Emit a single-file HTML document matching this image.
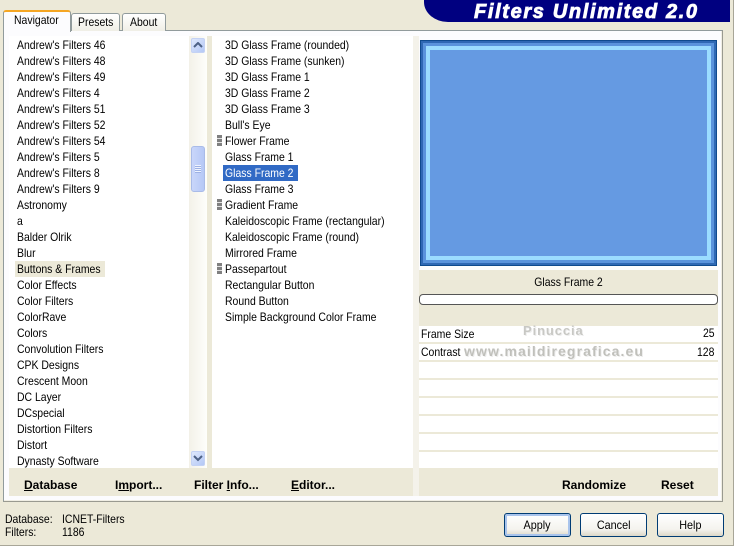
<!DOCTYPE html>
<html><head><meta charset="utf-8"><style>
html,body{margin:0;padding:0}
body{width:734px;height:546px;overflow:hidden;background:#ece9d8;position:relative;font-family:"Liberation Sans",sans-serif;font-size:12px;color:#000}
div{position:absolute;box-sizing:border-box}
.t{white-space:nowrap;line-height:16px;height:16px;transform:scaleX(.87);transform-origin:0 50%}
.b{font-weight:bold;font-size:12px;white-space:nowrap;line-height:16px;top:477px}
.btn{top:513px;width:67px;height:24px;border:1px solid #003c74;border-radius:3px;background:linear-gradient(#fff,#f4f3ee 70%,#dcd8c8);text-align:center;line-height:22px}
.btn span{display:inline-block;transform:scaleX(.9)}
.l{left:17px}.m{left:225px}
.grip{left:217px;width:5px;height:11px;background:repeating-linear-gradient(#808080 0,#808080 3px,#e4e4e4 3px,#e4e4e4 4px)}
u{text-decoration:underline}
</style></head><body>
<!-- logo -->
<div style="left:424px;top:0;width:306px;height:22px;background:#000080;border-bottom-left-radius:24px 20px"></div>
<div class="t" style="left:474px;top:1px;height:22px;line-height:22px;color:#fff;font-weight:bold;font-style:italic;font-size:20px;letter-spacing:1.65px;-webkit-text-stroke:.8px #fff;transform:none">Filters Unlimited 2.0</div>
<!-- panel -->
<div style="left:3px;top:30px;width:720px;height:472px;background:#fcfcfe;border:1px solid #919b9c;border-right-color:#9a9a90;border-bottom-color:#9a9a90;box-shadow:inset -1px -1px 0 #f0eee4"></div>
<!-- tabs -->
<div style="left:71px;top:13px;width:49px;height:18px;background:linear-gradient(#fff,#f0efe6);border:1px solid #919b9c;border-bottom:0;border-radius:3px 3px 0 0"></div>
<div style="left:122px;top:13px;width:44px;height:18px;background:linear-gradient(#fff,#f0efe6);border:1px solid #919b9c;border-bottom:0;border-radius:3px 3px 0 0"></div>
<div style="left:3px;top:10px;width:68px;height:22px;background:#fcfcfe;border:1px solid #919b9c;border-bottom:0;border-top:2px solid #f5a623;border-radius:3px 3px 0 0"></div>
<div class="t" style="left:14px;top:12px">Navigator</div>
<div class="t" style="left:78px;top:14px">Presets</div>
<div class="t" style="left:130px;top:14px">About</div>
<!-- list areas -->
<div style="left:9px;top:36px;width:180px;height:432px;background:#fff"></div>
<div style="left:189px;top:36px;width:18px;height:432px;background:linear-gradient(90deg,#f3f1e8,#fefefb)"></div>
<div style="left:207px;top:36px;width:5px;height:432px;background:#ece9d8"></div>
<div style="left:212px;top:36px;width:201px;height:432px;background:#fff"></div>
<div style="left:413px;top:36px;width:6px;height:460px;background:#f4f2ea"></div>
<div style="left:9px;top:468px;width:404px;height:28px;background:#ece9d8"></div>
<div style="left:419px;top:468px;width:299px;height:28px;background:#ece9d8"></div>
<!-- scrollbar -->
<div style="left:191px;top:38px;width:14px;height:15px;background:linear-gradient(135deg,#dfe8fc,#b4c8f6);border:1px solid #c4d2f4;border-radius:2px"></div>
<svg style="position:absolute;left:193px;top:42px" width="10" height="7"><path d="M1 5L5 1L9 5" fill="none" stroke="#4d6185" stroke-width="2"/></svg>
<div style="left:191px;top:146px;width:14px;height:46px;background:linear-gradient(90deg,#c9d6fa,#b6c8f6);border:1px solid #a9bbe8;border-radius:3px"></div>
<div style="left:195px;top:165px;width:6px;height:8px;background:repeating-linear-gradient(#eef3ff 0,#eef3ff 1px,#9db1e4 1px,#9db1e4 2px)"></div>
<div style="left:191px;top:451px;width:14px;height:15px;background:linear-gradient(135deg,#dfe8fc,#b4c8f6);border:1px solid #c4d2f4;border-radius:2px"></div>
<svg style="position:absolute;left:193px;top:455px" width="10" height="7"><path d="M1 1L5 5L9 1" fill="none" stroke="#4d6185" stroke-width="2"/></svg>
<!-- selections -->
<div style="left:15px;top:261px;width:90px;height:16px;background:#ece9d8"></div>
<div style="left:223px;top:165px;width:75px;height:16px;background:#316ac5"></div>
<!-- left list -->
<div class="t l" style="top:37px">Andrew's Filters 46</div>
<div class="t l" style="top:53px">Andrew's Filters 48</div>
<div class="t l" style="top:69px">Andrew's Filters 49</div>
<div class="t l" style="top:85px">Andrew's Filters 4</div>
<div class="t l" style="top:101px">Andrew's Filters 51</div>
<div class="t l" style="top:117px">Andrew's Filters 52</div>
<div class="t l" style="top:133px">Andrew's Filters 54</div>
<div class="t l" style="top:149px">Andrew's Filters 5</div>
<div class="t l" style="top:165px">Andrew's Filters 8</div>
<div class="t l" style="top:181px">Andrew's Filters 9</div>
<div class="t l" style="top:197px">Astronomy</div>
<div class="t l" style="top:213px">a</div>
<div class="t l" style="top:229px">Balder Olrik</div>
<div class="t l" style="top:245px">Blur</div>
<div class="t l" style="top:261px">Buttons &amp; Frames</div>
<div class="t l" style="top:277px">Color Effects</div>
<div class="t l" style="top:293px">Color Filters</div>
<div class="t l" style="top:309px">ColorRave</div>
<div class="t l" style="top:325px">Colors</div>
<div class="t l" style="top:341px">Convolution Filters</div>
<div class="t l" style="top:357px">CPK Designs</div>
<div class="t l" style="top:373px">Crescent Moon</div>
<div class="t l" style="top:389px">DC Layer</div>
<div class="t l" style="top:405px">DCspecial</div>
<div class="t l" style="top:421px">Distortion Filters</div>
<div class="t l" style="top:437px">Distort</div>
<div class="t l" style="top:453px">Dynasty Software</div>
<!-- middle list -->
<div class="t m" style="top:37px">3D Glass Frame (rounded)</div>
<div class="t m" style="top:53px">3D Glass Frame (sunken)</div>
<div class="t m" style="top:69px">3D Glass Frame 1</div>
<div class="t m" style="top:85px">3D Glass Frame 2</div>
<div class="t m" style="top:101px">3D Glass Frame 3</div>
<div class="t m" style="top:117px">Bull's Eye</div>
<div class="grip" style="top:135px"></div>
<div class="t m" style="top:133px">Flower Frame</div>
<div class="t m" style="top:149px">Glass Frame 1</div>
<div class="t m" style="top:165px;color:#fff">Glass Frame 2</div>
<div class="t m" style="top:181px">Glass Frame 3</div>
<div class="grip" style="top:199px"></div>
<div class="t m" style="top:197px">Gradient Frame</div>
<div class="t m" style="top:213px">Kaleidoscopic Frame (rectangular)</div>
<div class="t m" style="top:229px">Kaleidoscopic Frame (round)</div>
<div class="t m" style="top:245px">Mirrored Frame</div>
<div class="grip" style="top:263px"></div>
<div class="t m" style="top:261px">Passepartout</div>
<div class="t m" style="top:277px">Rectangular Button</div>
<div class="t m" style="top:293px">Round Button</div>
<div class="t m" style="top:309px">Simple Background Color Frame</div>
<!-- preview -->
<div style="left:420px;top:40px;width:297px;height:226px;background:#3f7bc6;border:1px solid #0f4a8e"></div>
<div style="left:421px;top:41px;width:295px;height:224px;border:2px solid #2f68b4"></div>
<div style="left:423px;top:43px;width:291px;height:220px;border:3px solid #5a93dc"></div>
<div style="left:426px;top:46px;width:285px;height:214px;border:4px solid #9bdcff;background:#659ae2"></div>
<!-- params -->
<div style="left:419px;top:270px;width:299px;height:56px;background:#ece9d8"></div>
<div class="t" style="left:419px;top:274px;width:299px;text-align:center;transform-origin:50% 50%">Glass Frame 2</div>
<div style="left:419px;top:294px;width:299px;height:11px;background:#fff;border:1px solid #555;border-radius:4px"></div>
<div style="left:419px;top:326px;width:299px;height:142px;background:#fff"></div>
<div style="left:419px;top:342px;width:299px;height:126px;background:repeating-linear-gradient(#ece9d8 0,#ece9d8 2px,#fff 2px,#fff 18px)"></div>
<div class="t" style="left:421px;top:326px">Frame Size</div>
<div class="t" style="left:703px;top:325px">25</div>
<div class="t" style="left:421px;top:344px">Contrast</div>
<div class="t" style="left:697px;top:344px">128</div>
<div class="t" style="left:523px;top:323px;color:#c8c8c4;font-weight:bold;font-size:13px;letter-spacing:.9px;text-shadow:1px 1px 0 #eee;transform:none">Pinuccia</div>
<div class="t" style="left:464px;top:343px;color:#c0c0bb;font-weight:bold;font-size:14px;letter-spacing:1.1px;text-shadow:1px 1px 0 #eee;transform:none">www.maildiregrafica.eu</div>
<!-- bottom bars -->
<div class="b" style="left:24px"><u>D</u>atabase</div>
<div class="b" style="left:115px">I<u>m</u>port...</div>
<div class="b" style="left:194px">Filter <u>I</u>nfo...</div>
<div class="b" style="left:291px"><u>E</u>ditor...</div>
<div class="b" style="left:562px">Randomize</div>
<div class="b" style="left:661px">Reset</div>
<!-- status -->
<div class="t" style="left:5px;top:511px">Database:</div>
<div class="t" style="left:62px;top:511px">ICNET-Filters</div>
<div class="t" style="left:5px;top:524px">Filters:</div>
<div class="t" style="left:62px;top:524px">1186</div>
<!-- buttons -->
<div class="btn" style="left:504px;box-shadow:inset 0 0 0 2px #a9c4ec"><span>Apply</span></div>
<div class="btn" style="left:580px"><span>Cancel</span></div>
<div class="btn" style="left:657px"><span>Help</span></div>
<div style="left:0;top:545px;width:734px;height:1px;background:#a8a698"></div>
<div style="left:733px;top:0;width:1px;height:546px;background:#a8a698"></div>
</body></html>
